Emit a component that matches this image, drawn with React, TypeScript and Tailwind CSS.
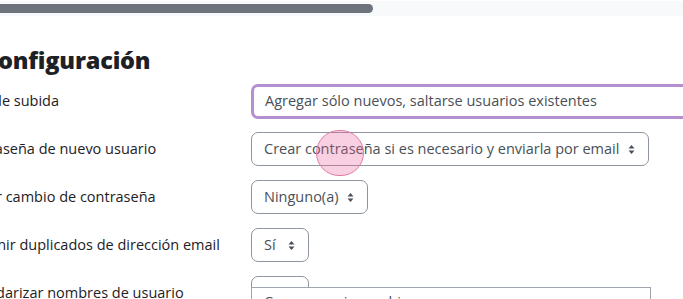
import React from 'react';

const rows = [
  { label: 'Tipo de subida', value: 'Agregar sólo nuevos, saltarse usuarios existentes', kind: 'focus', shift: 'ml-[1px]' },
  { label: 'Contraseña de nuevo usuario', value: 'Crear contraseña si es necesario y enviarla por email', kind: 'select', shift: '-ml-[2px]' },
  { label: 'Forzar cambio de contraseña', value: 'Ninguno(a)', kind: 'select', shift: '' },
  { label: 'Prevenir duplicados de dirección email', value: 'Sí', kind: 'select', pad: true, shift: '' },
  { label: 'Estandarizar nombres de usuario', value: 'No', kind: 'select', pad: true, shift: '' },
];

function Arrows() {
  return (
    <svg width="7" height="11" viewBox="0 0 7 11" className="shrink-0">
      <path d="M3.5 1 L6.5 4.5 L0.5 4.5 Z" fill="#495057" />
      <path d="M3.5 10 L6.5 6.5 L0.5 6.5 Z" fill="#495057" />
    </svg>
  );
}

export default function App() {
  return (
    <div className="relative w-[683px] h-[299px] overflow-hidden bg-white font-['Open_Sans',sans-serif]">
      {/* scrollbar */}
      <div className="mt-[1px] h-[15px] bg-[#f8f9fa] flex items-center">
        <div className="h-[9px] w-[373px] rounded-r-full bg-[#6c737b]" />
      </div>

      <h2 className="-ml-[17px] mt-[28px] text-[23.5px] leading-[32px] font-extrabold text-[#1d2125] tracking-[-0.2px]">
        Configuración
      </h2>

      <div className="mt-[8px] -ml-[41px] flex flex-col gap-[14px]">
        {rows.map((r) => (
          <div key={r.label} className="flex items-center h-[34px]">
            <div className="w-[292px] shrink-0 text-[14.5px] text-[#1d2125]">
              <span className={'inline-block ' + r.shift}>{r.label}</span>
            </div>
            {r.kind === 'focus' ? (
              <div className="h-[35px] w-[460px] shrink-0 rounded-[7px] border-[3px] border-[#b68fd0] flex items-center pl-[11px] text-[14.5px] text-[#495057]">
                {r.value}
              </div>
            ) : (
              <div className="h-[34px] rounded-[7px] border border-[#8f959e] flex items-center gap-[9px] pl-[12px] pr-[13px] text-[14.5px] text-[#495057]">
                <span className={r.pad ? 'w-[15px]' : ''}>{r.value}</span>
                <Arrows />
              </div>
            )}
          </div>
        ))}
      </div>

      {/* touch indicator */}
      <div className="absolute left-[316px] top-[130px] w-[48px] h-[46px] rounded-full bg-[#e8639b]/30 border border-[#e27aa7]" />

      {/* dropdown list */}
      <div className="absolute left-[251px] top-[287px] w-[400px] h-[40px] bg-white border border-[#a0a6ad] pl-[12px] pt-[3px] text-[14.5px] text-[#495057]">
        Conservar sin cambios
      </div>
    </div>
  );
}
